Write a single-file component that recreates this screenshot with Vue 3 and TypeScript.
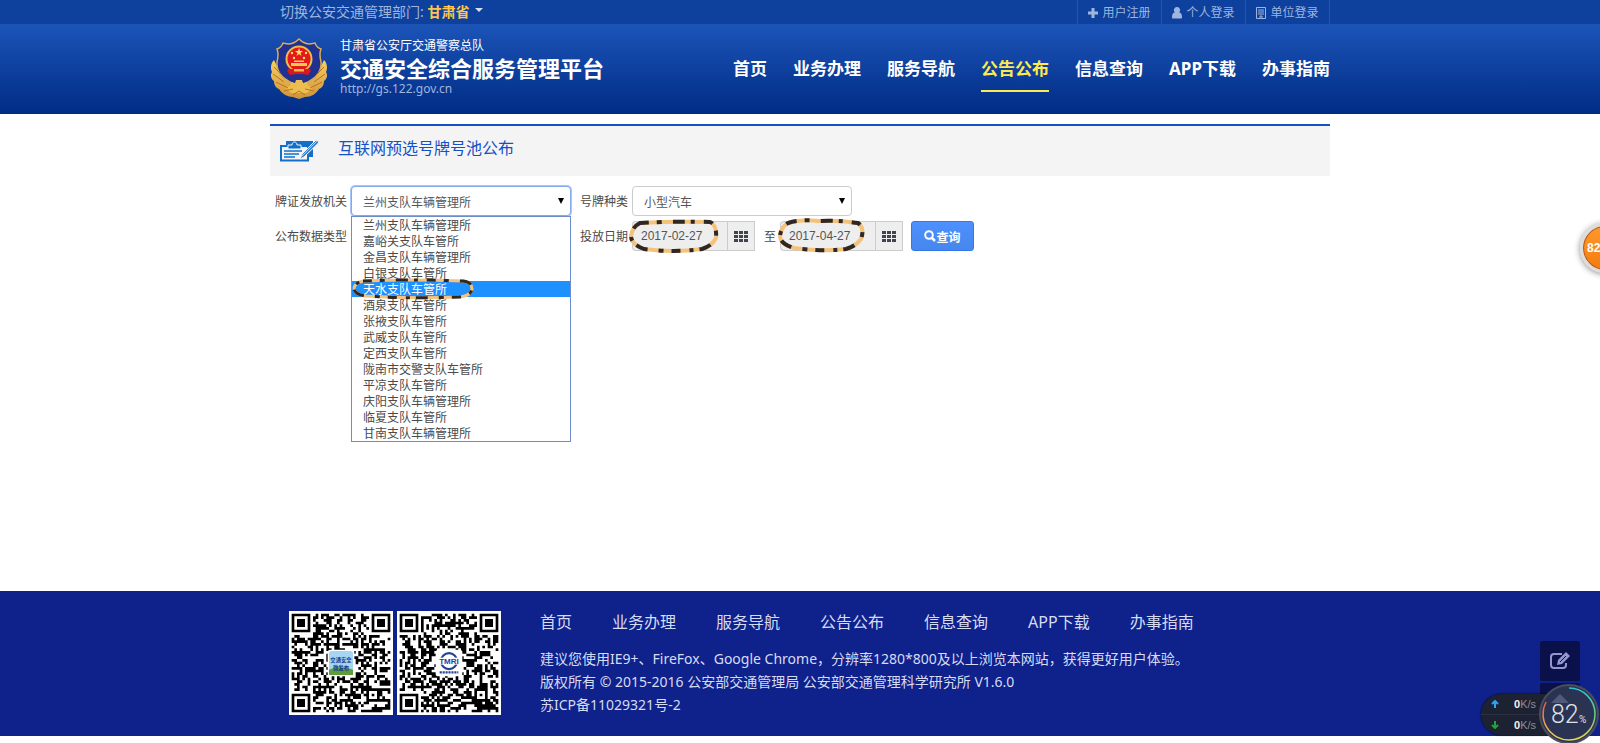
<script setup lang="ts">
import { ref } from 'vue'

const navItems = ['首页', '业务办理', '服务导航', '公告公布', '信息查询', 'APP下载', '办事指南']
const activeNav = '公告公布'

const offices = [
  '兰州支队车辆管理所',
  '嘉峪关支队车管所',
  '金昌支队车辆管理所',
  '白银支队车管所',
  '天水支队车管所',
  '酒泉支队车管所',
  '张掖支队车管所',
  '武威支队车管所',
  '定西支队车管所',
  '陇南市交警支队车管所',
  '平凉支队车管所',
  '庆阳支队车辆管理所',
  '临夏支队车管所',
  '甘南支队车辆管理所',
]
const office = ref(offices[0])
const highlighted = '天水支队车管所'
const dateFrom = ref('2017-02-27')
const dateTo = ref('2017-04-27')

const SIZE = 37

function inFinder(x: number, y: number): boolean {
  return (x < 8 && y < 8) || (x > SIZE - 9 && y < 8) || (x < 8 && y > SIZE - 9)
}

function ring(x: number, y: number, n: number): string {
  return `M${x} ${y}h${n}v${n}h-${n}zM${x + 1} ${y + 1}v${n - 2}h${n - 2}v-${n - 2}z`
}

function qrPath(seed: number): string {
  let state = seed
  let d = ''
  for (let y = 0; y < SIZE; y++) {
    for (let x = 0; x < SIZE; x++) {
      state = (state * 1103515245 + 12345) % 2147483648
      const inAlign = x > 27 && x < 33 && y > 27 && y < 33
      const inLogo = x > 13 && x < 23 && y > 13 && y < 23
      if (inFinder(x, y) || inAlign || inLogo) continue
      if ((state >> 16) % 100 < 51) d += `M${x} ${y}h1v1h-1z`
    }
  }
  for (const [x, y] of [[0, 0], [SIZE - 7, 0], [0, SIZE - 7]]) {
    d += ring(x, y, 7) + `M${x + 2} ${y + 2}h3v3h-3z`
  }
  return d + ring(28, 28, 5) + 'M30 30h1v1h-1z'
}

const qrOne = qrPath(20171)
const qrTwo = qrPath(91342)
const gridCells = [0, 1, 2].flatMap((r) => [0, 1, 2].map((c) => ({ x: c * 5, y: r * 4 })))
</script>

<template>
  <div class="page">
    <div class="topbar">
      <div class="wrap topbar-row">
        <div class="region">
          切换公安交通管理部门: <button type="button" class="region-btn">甘肃省<i class="caret"></i></button>
        </div>
        <div class="account">
          <a href="#">
            <svg width="10" height="10" viewBox="0 0 10 10"><path d="M3.5 0h3v3.5H10v3H6.500V10h-3V6.500H0v-3h3.500z" fill="currentColor" /></svg>用户注册
          </a>
          <a href="#">
            <svg width="10" height="12" viewBox="0 0 10 12"><path d="M5 0a3 3 0 0 1 2 5.300c2 .5 3 2 3 5.200 0 .7-.4 1-1 1H1c-.6 0-1-.3-1-1 0-3.200 1-4.700 3-5.200A3 3 0 0 1 5 0z" fill="currentColor" /></svg>个人登录
          </a>
          <a href="#">
            <svg width="10" height="12" viewBox="0 0 10 12"><path d="M.5.5h9v11h-9zM2 3h6M2 5h6M2 7h6M4 11V9h2v2" fill="none" stroke="currentColor" /></svg>单位登录
          </a>
        </div>
      </div>
    </div>

    <header class="header">
      <div class="wrap header-row">
        <svg class="emblem" width="58" height="62" viewBox="0 0 58 62">
          <defs>
            <linearGradient id="gold" x1="0" y1="0" x2="0" y2="1"><stop offset="0" stop-color="#f6cf62" /><stop offset="1" stop-color="#d0923a" /></linearGradient>
          </defs>
          <path d="M4 22c-3 3-4 8-2 12-2 3-1 7 2 9 0 4 2 7 5 8 3 5 9 8 14 8l6 2 6-2c6 0 11-3 14-8 3-1 5-4 5-8 3-2 4-6 2-9 2-4 1-9-2-12L45 40 29 47 13 40z" fill="url(#gold)" />
          <path d="M29 1c3 3 7 5 11 5l5-1c1 3 3 5 6 6-2 5-1 9 0 13 1 12-7 18-22 24C14 42 6 36 7 24c1-4 2-8 0-13 3-1 5-3 6-6l5 1c4 0 8-2 11-5z" fill="#21318f" stroke="#d9ab5b" stroke-width="1.500" />
          <circle cx="29" cy="21" r="12.500" fill="#e3191d" stroke="#edbd4c" stroke-width="2" />
          <path d="M29 10l1 3h3l-2.500 2 1 3-2.500-2-2.500 2 1-3-2.500-2h3z" fill="#ffe25e" />
          <circle cx="22" cy="15" r="1.200" fill="#ffe25e" /><circle cx="36" cy="15" r="1.200" fill="#ffe25e" /><circle cx="24" cy="20" r="1.200" fill="#ffe25e" /><circle cx="34" cy="20" r="1.200" fill="#ffe25e" />
          <path d="M21 25h16v3H21zM24 22.500h10v1.500H24z" fill="#f5cc4e" />
          <path d="M19 30c3 2 5 1 7 0h6c2 1 4 2 7 0l2 3-3 4c-4-1-6-1-9-1s-5 0-9 1l-3-4z" fill="#d9171d" />
          <path d="M24 31h10v2.500H24z" fill="#efbd48" />
          <path d="M26 42h6l1 3 4-1 1 4 5 1-6 6H21l-6-6 5-1 1-4 4 1z" fill="#eebd50" />
          <path d="M4 29l8 8M3 36l11 8M6 44l12 6M54 29l-8 8M55 36l-11 8M52 44l-12 6M14 53l9-2M44 53l-9-2M23 57l6-4 6 4" stroke="#b5741c" stroke-width="1" fill="none" />
        </svg>
        <div class="brand">
          <div class="brand-dept">甘肃省公安厅交通警察总队</div>
          <h1>交通安全综合服务管理平台</h1>
          <div class="brand-url">http://gs.122.gov.cn</div>
        </div>
        <nav class="nav">
          <a v-for="n in navItems" :key="n" href="#" :class="{ active: n === activeNav }">{{ n }}</a>
        </nav>
      </div>
    </header>

    <main class="wrap main">
      <div class="band">
        <svg width="40" height="24" viewBox="0 0 40 24">
          <path d="M6 2h27v16H6z" fill="#1270cb" />
          <path d="M1 7h27v14.500H1z" fill="#f4f4f4" stroke="#1270cb" stroke-width="2" />
          <path d="M8 10V6h4c0-4 5-4 5 0h4v4z" fill="#1270cb" stroke="#f4f4f4" />
          <path d="M4 12h18M4 15h15M4 18h11" stroke="#1270cb" stroke-width="1.500" />
          <path d="M20 20l2-5L36 1l3 1.500-1 2L24 18z" fill="#3e86cb" stroke="#f4f4f4" stroke-width="1" />
          <path d="M22 17L37 2" stroke="#a9cbe9" stroke-width="1" />
        </svg>
        <h2>互联网预选号牌号池公布</h2>
      </div>

      <form class="form" @submit.prevent>
        <label for="office">牌证发放机关</label>
        <div class="select focused">
          <select id="office" v-model="office">
            <option v-for="o in offices" :key="o">{{ o }}</option>
          </select>
          <i class="arrow"></i>
          <ul class="menu" role="listbox" aria-label="牌证发放机关">
            <li v-for="o in offices" :key="o" role="option" :aria-selected="o === highlighted" :class="{ on: o === highlighted }">
              {{ o }}
              <svg v-if="o === highlighted" class="mark mark-item" viewBox="0 0 124 22">
                <path class="mark-base" d="M12 3Q60 1 112 3Q121 4 121 11Q120 18 108 19Q60 21 14 18Q3 16 3 10Q4 5 12 3z" />
                <path class="mark-dots" d="M12 3Q60 1 112 3Q121 4 121 11Q120 18 108 19Q60 21 14 18Q3 16 3 10Q4 5 12 3z" />
              </svg>
            </li>
          </ul>
        </div>
        <label for="plate" class="second">号牌种类</label>
        <div class="select">
          <select id="plate"><option>小型汽车</option></select>
          <i class="arrow"></i>
        </div>
        <span></span>

        <label for="kind">公布数据类型</label>
        <div class="select"><select id="kind"></select></div>
        <label for="from" class="second">投放日期</label>
        <div class="dates">
          <div class="date">
            <input id="from" v-model="dateFrom" type="text" readonly />
            <button type="button" aria-label="选择日期">
              <svg width="14" height="11" viewBox="0 0 14 11"><rect v-for="c in gridCells" :key="c.x + '-' + c.y" :x="c.x" :y="c.y" width="4" height="3" fill="#3f4450" /></svg>
            </button>
            <svg class="mark mark-date" viewBox="0 0 92 36">
              <path class="mark-base" d="M12 5Q45 3 82 4Q89 7 88 20Q84 28 74 31Q45 35 16 31Q3 26 3 18Q4 9 12 5z" />
              <path class="mark-dots" d="M12 5Q45 3 82 4Q89 7 88 20Q84 28 74 31Q45 35 16 31Q3 26 3 18Q4 9 12 5z" />
            </svg>
          </div>
          <label for="to">至</label>
          <div class="date">
            <input id="to" v-model="dateTo" type="text" readonly />
            <button type="button" aria-label="选择日期">
              <svg width="14" height="11" viewBox="0 0 14 11"><rect v-for="c in gridCells" :key="c.x + '-' + c.y" :x="c.x" :y="c.y" width="4" height="3" fill="#3f4450" /></svg>
            </button>
            <svg class="mark mark-date" viewBox="0 0 92 36">
              <path class="mark-base" d="M12 5Q25 1 42 3Q62 2 82 5Q89 10 85 21Q80 28 70 31Q45 34 18 30Q4 26 4 18Q5 9 12 5z" />
              <path class="mark-dots" d="M12 5Q25 1 42 3Q62 2 82 5Q89 10 85 21Q80 28 70 31Q45 34 18 30Q4 26 4 18Q5 9 12 5z" />
            </svg>
          </div>
        </div>
        <button type="submit" class="query">
          <svg width="12" height="12" viewBox="0 0 12 12"><circle cx="5" cy="5" r="3.800" fill="none" stroke="#fff" stroke-width="2" /><path d="M8 8l3 3" stroke="#fff" stroke-width="2.500" /></svg>查询
        </button>
      </form>
    </main>

    <footer class="footer">
      <div class="wrap footer-row">
        <div class="codes">
          <svg class="qr" viewBox="-1 -1 39 39">
            <rect x="-1" y="-1" width="39" height="39" fill="#fff" />
            <path :d="qrOne" fill="#000" />
            <rect x="13.500" y="13.500" width="10" height="10" rx="1" fill="#fff" />
            <rect x="14" y="14" width="9" height="9" rx="1" fill="#a5d5f2" />
            <path d="M14 21q4-2 9 0v2h-9z" fill="#5e9c3c" />
            <text x="18.500" y="18.200" text-anchor="middle" class="qr-zh">交通安全</text>
            <text x="18.500" y="21.200" text-anchor="middle" class="qr-zh">微发布</text>
          </svg>
          <svg class="qr" viewBox="-1 -1 39 39">
            <rect x="-1" y="-1" width="39" height="39" fill="#fff" />
            <path :d="qrTwo" fill="#000" />
            <rect x="13.500" y="13.500" width="10" height="10" rx="1" fill="#fff" />
            <circle cx="18.500" cy="17.800" r="3" fill="none" stroke="#24419b" stroke-width=".8" />
            <rect x="14.500" y="16.500" width="8" height="2.600" fill="#fff" />
            <text x="18.500" y="19" text-anchor="middle" class="qr-en">TMRI</text>
            <path d="M15 22h7" stroke="#24419b" stroke-width=".8" stroke-dasharray=".8 .3" />
          </svg>
        </div>
        <div class="foot-text">
          <nav class="foot-nav">
            <a v-for="n in navItems" :key="n" href="#">{{ n }}</a>
          </nav>
          <p>建议您使用IE9+、FireFox、Google Chrome，分辨率1280*800及以上浏览本网站，获得更好用户体验。</p>
          <p>版权所有 © 2015-2016 公安部交通管理局 公安部交通管理科学研究所 V1.6.0</p>
          <p>苏ICP备11029321号-2</p>
        </div>
      </div>
    </footer>

    <div class="bubble">82</div>

    <div class="tools">
      <button type="button" aria-label="反馈">
        <svg width="21" height="18" viewBox="0 0 21 18" fill="none" stroke="#9297cd" stroke-width="2">
          <path d="M12 2H4Q1 2 1 5v8q0 3 3 3h9q3 0 3-3v-2" />
          <path d="M7 13l1-5L16 0l4 4-8 8z" fill="#9297cd" stroke="none" />
          <path d="M10 10L16 4" stroke="#0a1049" stroke-width="1" />
        </svg>
      </button>
      <button type="button" aria-label="返回顶部"></button>
    </div>

    <div class="monitor">
      <div class="speeds">
        <div><svg width="8" height="8" viewBox="0 0 8 8"><path d="M4 8V2M1 4l3-3 3 3" fill="none" stroke="#2fa4ee" stroke-width="2" /></svg><span><b>0</b>K/s</span></div>
        <div><svg width="8" height="8" viewBox="0 0 8 8"><path d="M4 0v6M1 4l3 3 3-3" fill="none" stroke="#22a535" stroke-width="2" /></svg><span><b>0</b>K/s</span></div>
      </div>
      <svg class="gauge" viewBox="0 0 60 60">
        <defs>
          <linearGradient id="arc" x1="0" y1="0" x2="0" y2="1"><stop offset="0" stop-color="#23c5d5" /><stop offset=".55" stop-color="#74cf83" /><stop offset="1" stop-color="#ecd651" /></linearGradient>
          <linearGradient id="arcLeft" x1="0" y1="0" x2="0" y2="1"><stop offset="0" stop-color="#ef5948" /><stop offset="1" stop-color="#ecd651" /></linearGradient>
        </defs>
        <circle cx="30" cy="30" r="29" fill="#2b3352" stroke="#4a4e5b" stroke-width="2" />
        <path d="M12 19l9-9 9 9z" fill="#515a7b" />
        <path d="M30 4A26 26 0 0 1 30 56" fill="none" stroke="url(#arc)" stroke-width="1.500" />
        <path d="M30 56A26 26 0 0 1 7 18" fill="none" stroke="url(#arcLeft)" stroke-width="1.500" />
        <text x="12" y="39" class="gauge-num">82</text>
        <text x="40" y="39" class="gauge-pct">%</text>
      </svg>
    </div>
  </div>
</template>

<style>
body {
  margin: 0;
}
</style>

<style scoped>
.page {
  position: relative;
  display: flex;
  flex-direction: column;
  min-height: 100vh;
  padding-bottom: 7px;
  box-sizing: border-box;
  overflow: hidden;
  background: #fff;
  color: #4a4a4a;
  font: 12px/18px "Liberation Sans", "Noto Sans CJK SC", sans-serif;
}
a {
  color: inherit;
  text-decoration: none;
}
.wrap {
  width: 100%;
  max-width: 1060px;
  margin: 0 auto;
}
button {
  font-family: inherit;
  cursor: pointer;
}
.topbar {
  background: #0e419d;
}
.topbar-row {
  display: flex;
  justify-content: space-between;
  height: 24px;
}
.region {
  padding-left: 10px;
  color: #9fb5de;
  font: 14px/24px "Noto Sans", "Noto Sans CJK SC", sans-serif;
}
.region-btn {
  padding: 0;
  border: 0;
  background: none;
  color: #ffc649;
  font-size: 14px;
  font-weight: 700;
}
.caret {
  display: inline-block;
  margin-left: 6px;
  border: 4px solid transparent;
  border-top-color: #d5e0f4;
  border-bottom: 0;
  vertical-align: 5px;
}
.account {
  display: flex;
  border-right: 1px solid #1f55b3;
}
.account a {
  display: flex;
  align-items: center;
  justify-content: center;
  gap: 4px;
  width: 83px;
  padding-top: 1px;
  border-left: 1px solid #1f55b3;
  color: #9fb5de;
}
.header {
  background: linear-gradient(#1c54b8, #002c85);
}
.header-row {
  display: flex;
  height: 90px;
}
.emblem {
  margin-top: 14px;
}
.brand {
  margin: 13px 0 0 12px;
  color: #fff;
  font-family: "Noto Sans", "Noto Sans CJK SC", sans-serif;
}
h1 {
  margin: 0;
  font-size: 22px;
  line-height: 26px;
}
.brand-dept {
  line-height: 18px;
}
.brand-url {
  color: #9fb5de;
  line-height: 15px;
}
.nav {
  display: flex;
  align-items: flex-start;
  gap: 26px;
  margin-left: auto;
  padding-top: 30px;
  color: #fff;
  font: 700 17px/30px "Noto Sans", "Noto Sans CJK SC", sans-serif;
}
.nav a {
  padding-bottom: 6px;
  border-bottom: 2px solid transparent;
}
.nav .active {
  color: #fee94e;
  border-color: #fee94e;
}
.main {
  flex: 1;
  padding-top: 10px;
}
.band {
  display: flex;
  gap: 18px;
  padding: 13px 10px;
  border-top: 2px solid #1450c8;
  background: #f4f4f4;
}
h2 {
  margin: 0;
  color: #1450c8;
  font-size: 16px;
  font-weight: 400;
  line-height: 20px;
}
.form {
  display: grid;
  grid-template-columns: 72px 220px 53px 275px auto;
  grid-template-rows: 30px 30px;
  align-items: center;
  justify-content: start;
  column-gap: 4px;
  row-gap: 5px;
  padding: 10px 5px;
}
.form label {
  padding-top: 2px;
  white-space: nowrap;
}
.form .second {
  padding-left: 5px;
}
.select {
  position: relative;
  width: 220px;
  height: 30px;
}
.select select {
  width: 100%;
  height: 100%;
  padding: 4px 11px 0;
  border: 1px solid #ccc;
  border-radius: 4px;
  outline: 0;
  background: #fff;
  color: #555;
  font: inherit;
  appearance: none;
}
.focused select {
  border-color: #84a9ec;
  box-shadow: 0 0 0 1px #a9c6f8;
}
.arrow {
  position: absolute;
  top: 12px;
  right: 7px;
  border: 3px solid transparent;
  border-top: 6px solid #000;
  border-bottom: 0;
}
.menu {
  position: absolute;
  z-index: 2;
  top: 30px;
  left: 0;
  width: 100%;
  margin: 0;
  padding: 0;
  box-sizing: border-box;
  border: 1px solid #6c8dca;
  background: #fff;
  list-style: none;
}
.menu li {
  position: relative;
  padding: 2px 0 0 11px;
  line-height: 14px;
}
.menu .on {
  z-index: 1;
  background: #1e90ff;
  color: #fff;
}
.mark {
  position: absolute;
  pointer-events: none;
}
.mark path {
  fill: none;
  stroke-width: 4;
}
.mark-base {
  stroke: #f5c27b;
}
.mark-dots {
  stroke: #2d2725;
  stroke-dasharray: 9 8 5 11 12 6 4 9;
}
.mark-item {
  top: -3px;
  left: -1px;
  width: 124px;
}
.mark-item path {
  stroke-width: 3;
}
.mark-date {
  top: -3px;
  left: -4px;
  width: 92px;
}
.dates {
  display: flex;
  align-items: center;
  gap: 4px;
}
.dates label {
  margin-left: 5px;
}
.date {
  position: relative;
  display: flex;
  height: 30px;
}
.date input {
  width: 95px;
  padding: 0 8px;
  box-sizing: border-box;
  border: 1px solid #ccc;
  border-right: 0;
  border-radius: 4px 0 0 4px;
  background: #eee;
  color: #555;
  font: inherit;
}
.date button {
  display: grid;
  place-items: center;
  width: 28px;
  padding: 0;
  border: 1px solid #ccc;
  background: #eee;
}
.query {
  display: flex;
  align-items: center;
  justify-content: center;
  width: 63px;
  height: 30px;
  padding: 0;
  border: 1px solid #3079ed;
  border-radius: 3px;
  background: linear-gradient(#4d90fe, #4787ed);
  color: #fff;
  font-size: 12px;
  font-weight: 700;
}
.footer {
  background: #0f218b;
  color: #d6dcf3;
  font-family: "Noto Sans", "Noto Sans CJK SC", sans-serif;
}
.footer-row {
  display: flex;
  gap: 39px;
  padding: 20px 0 20px 19px;
  box-sizing: border-box;
}
.codes {
  display: flex;
  gap: 4px;
}
.qr {
  width: 104px;
  height: 104px;
}
.qr-zh {
  fill: #14408f;
  font: 700 2px "Noto Sans CJK SC", sans-serif;
}
.qr-en {
  fill: #24419b;
  font: 700 3px "Liberation Sans", sans-serif;
}
.foot-nav {
  display: flex;
  gap: 40px;
  margin-bottom: 13px;
  font-size: 16px;
  line-height: 23px;
}
.foot-text p {
  margin: 0;
  font-size: 14px;
  line-height: 23px;
}
.bubble {
  position: absolute;
  top: 223px;
  right: -30px;
  width: 44px;
  height: 44px;
  border: 3px solid #dcdcdc;
  border-radius: 50%;
  background: linear-gradient(#ff9a2a, #f47a10);
  box-shadow: inset 0 0 0 1px #b4581a, 0 1px 6px #888;
  color: #fff;
  font-weight: 700;
  line-height: 44px;
  text-indent: 4px;
}
.tools {
  position: absolute;
  right: 20px;
  bottom: 20px;
  display: grid;
  gap: 2px;
}
.tools button {
  display: grid;
  place-items: center;
  width: 40px;
  height: 40px;
  padding: 0;
  border: 0;
  border-radius: 2px;
  background: #0a1049;
}
.monitor {
  position: absolute;
  right: 1px;
  bottom: -1px;
  display: flex;
  align-items: center;
}
.speeds {
  width: 78px;
  margin-right: -20px;
  border-radius: 21px 0 0 21px;
  background: #1d2232;
  box-shadow: 0 0 2px #000;
}
.speeds div {
  display: flex;
  align-items: center;
  gap: 15px;
  height: 20px;
  padding-left: 10px;
  color: #8b8d99;
  font-size: 11px;
}
.speeds div + div {
  border-top: 1px solid #2c3142;
}
.speeds b {
  color: #f2f2f2;
}
.gauge {
  position: relative;
  width: 60px;
  height: 60px;
}
.gauge-num {
  fill: #dfe2ea;
  font: 300 25px Roboto, sans-serif;
}
.gauge-pct {
  fill: #dfe2ea;
  font: 10px Roboto, sans-serif;
}
</style>
